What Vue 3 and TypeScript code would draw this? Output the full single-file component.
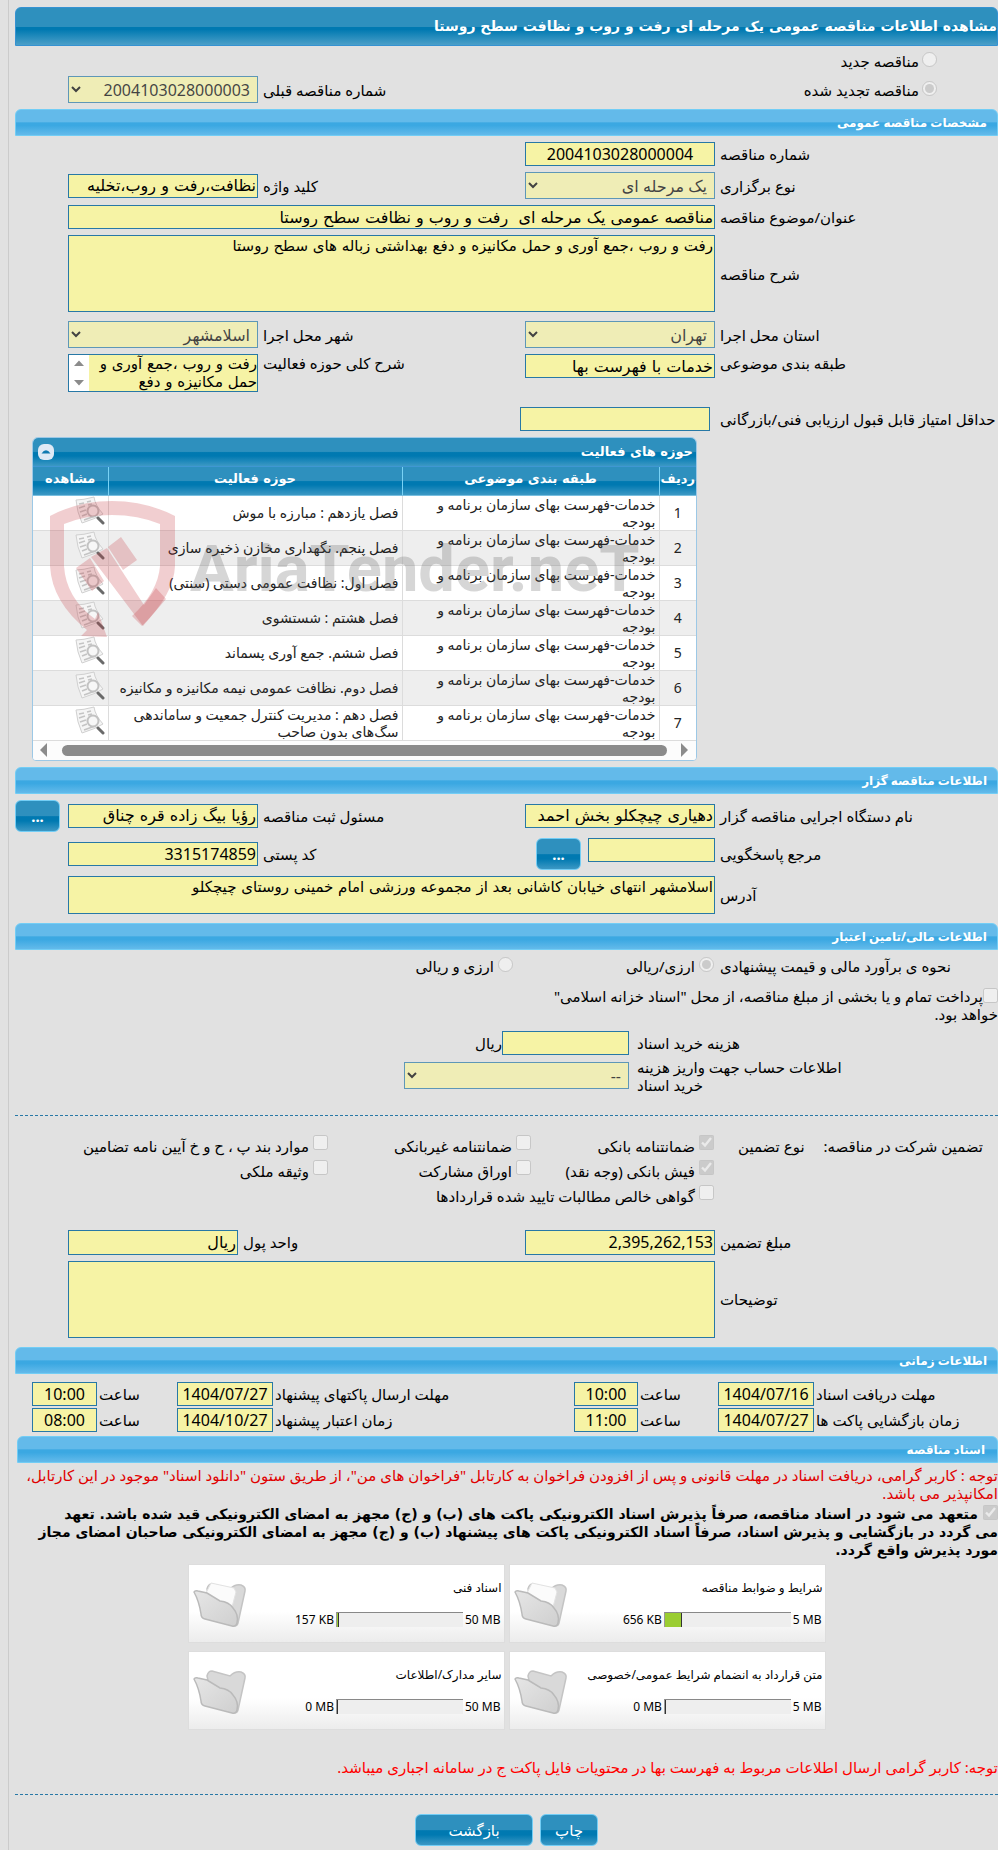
<script setup lang="ts">
interface Activity {
  id: number
  category: string
  title: string
}
interface Folder {
  title: string
  used: string
  limit: string
  percent: number
  filled: boolean
}

const description = 'رفت و روب ،جمع آوری و حمل مکانیزه و دفع بهداشتی زباله های سطح روستا'
const scope = 'رفت و روب ،جمع آوری و\nحمل مکانیزه و دفع'
const address = 'اسلامشهر انتهای خیابان کاشانی بعد از مجموعه ورزشی امام خمینی روستای چیچکلو'

const category = 'خدمات-فهرست بهای سازمان برنامه و بودجه'
const activities: Activity[] = [
  'فصل یازدهم : مبارزه با موش',
  'فصل پنجم. نگهداری مخازن ذخیره سازی',
  'فصل اول: نظافت عمومی دستی (سنتی)',
  'فصل هشتم : شستشوی',
  'فصل ششم. جمع آوری پسماند',
  'فصل دوم. نظافت عمومی نیمه مکانیزه و مکانیزه',
  'فصل دهم : مدیریت کنترل جمعیت و ساماندهی سگ‌های بدون صاحب',
].map((title, i) => ({ id: i + 1, category, title }))

const folders: Folder[] = [
  { title: 'شرایط و ضوابط مناقصه', used: '656 KB', limit: '5 MB', percent: 13, filled: true },
  { title: 'اسناد فنی', used: '157 KB', limit: '50 MB', percent: 1, filled: true },
  { title: 'متن قرارداد به انضمام شرایط عمومی/خصوصی', used: '0 MB', limit: '5 MB', percent: 0, filled: false },
  { title: 'سایر مدارک/اطلاعات', used: '0 MB', limit: '50 MB', percent: 0, filled: false },
]

const guarantees = [
  [
    { id: 'g1', text: 'ضمانتنامه بانکی', on: true },
    { id: 'g2', text: 'ضمانتنامه غیربانکی', on: false },
    { id: 'g3', text: 'موارد بند پ ، ح و خ آیین نامه تضامین', on: false },
  ],
  [
    { id: 'g4', text: 'فیش بانکی (وجه نقد)', on: true },
    { id: 'g5', text: 'اوراق مشارکت', on: false },
    { id: 'g6', text: 'وثیقه ملکی', on: false },
  ],
  [{ id: 'g7', text: 'گواهی خالص مطالبات تایید شده قراردادها', on: false }],
]

const schedule = [
  [
    { id: 's1', label: 'مهلت دریافت اسناد', date: '1404/07/16', time: '10:00' },
    { id: 's2', label: 'مهلت ارسال پاکتهای پیشنهاد', date: '1404/07/27', time: '10:00' },
  ],
  [
    { id: 's3', label: 'زمان بازگشایی پاکت ها', date: '1404/07/27', time: '11:00' },
    { id: 's4', label: 'زمان اعتبار پیشنهاد', date: '1404/10/27', time: '08:00' },
  ],
]
</script>

<template>
  <main class="page" dir="rtl">
    <h1 class="title">مشاهده اطلاعات مناقصه عمومی یک مرحله ای رفت و روب و نظافت سطح روستا</h1>

    <div class="kind first">
      <input id="kind-new" type="radio" name="kind" disabled /><label for="kind-new">مناقصه جدید</label>
    </div>
    <div class="row kind-row">
      <div class="kind span2">
        <input id="kind-renewed" type="radio" name="kind" checked disabled /><label for="kind-renewed">مناقصه تجدید شده</label>
      </div>
      <label class="lbl" for="prev">شماره مناقصه قبلی</label>
      <select id="prev" disabled><option>2004103028000003</option></select>
    </div>

    <h2 class="bar">مشخصات مناقصه عمومی</h2>
    <div class="row">
      <label class="lbl" for="num">شماره مناقصه</label>
      <input id="num" class="center" type="text" readonly value="2004103028000004" />
    </div>
    <div class="row">
      <label class="lbl" for="type">نوع برگزاری</label>
      <select id="type" disabled><option>یک مرحله ای</option></select>
      <label class="lbl" for="kw">کلید واژه</label>
      <input id="kw" class="fa" type="text" readonly value="نظافت،رفت و روب،تخلیه" />
    </div>
    <div class="row">
      <label class="lbl" for="subject">عنوان/موضوع مناقصه</label>
      <input id="subject" class="fa span3" type="text" readonly value="مناقصه عمومی یک مرحله ای  رفت و روب و نظافت سطح روستا" />
    </div>
    <div class="row">
      <label class="lbl" for="desc">شرح مناقصه</label>
      <textarea id="desc" class="span3 tall" readonly :value="description"></textarea>
    </div>
    <div class="row loose">
      <label class="lbl" for="province">استان محل اجرا</label>
      <select id="province" disabled><option>تهران</option></select>
      <label class="lbl" for="city">شهر محل اجرا</label>
      <select id="city" disabled><option>اسلامشهر</option></select>
    </div>
    <div class="row top">
      <label class="lbl" for="cls">طبقه بندی موضوعی</label>
      <input id="cls" class="fa" type="text" readonly value="خدمات با فهرست بها" />
      <label class="lbl" for="scope">شرح کلی حوزه فعالیت</label>
      <div class="scrollbox">
        <textarea id="scope" readonly :value="scope"></textarea>
        <svg class="vscroll" viewBox="0 0 20 36" aria-hidden="true">
          <path d="M5 11 L10 5.500 L15 11 Z M5 25 L10 30.500 L15 25 Z" fill="#8b8b8b" />
        </svg>
      </div>
    </div>
    <div class="row score">
      <label class="lbl" for="score">حداقل امتیاز قابل قبول ارزیابی فنی/بازرگانی</label>
      <input id="score" type="text" readonly />
    </div>

    <section class="panel">
      <header class="panel-head">
        <h3>حوزه های فعالیت</h3>
        <button type="button" class="collapse" aria-label="بستن">
          <svg viewBox="0 0 16 16"><path d="M3.500 9.500 Q8 3 12.500 9.500 Z" fill="#1079b0" /></svg>
        </button>
      </header>
      <table>
        <thead>
          <tr>
            <th class="c-num">ردیف</th>
            <th class="c-cat">طبقه بندی موضوعی</th>
            <th class="c-act">حوزه فعالیت</th>
            <th class="c-view">مشاهده</th>
          </tr>
        </thead>
        <tbody>
          <tr v-for="a in activities" :key="a.id">
            <td class="num">{{ a.id }}</td>
            <td class="cat">{{ a.category }}</td>
            <td>{{ a.title }}</td>
            <td class="view">
              <button type="button" class="icon" aria-label="مشاهده">
                <svg viewBox="0 0 30 30">
                  <path d="M1 4 Q8 4 19 1 Q20 9 28 18 Q20 23 7 27 Q2 16 1 4Z" fill="#f5f5f5" stroke="#d0d0d0" stroke-width="1" />
                  <path d="M4 8 L9 7 M4 12 L10 10 M5 16 L11 14 M7 20 L12 18 M12 6 L16 5 M13 9 L17 8 M9 24 L20 20" stroke="#c4c4c4" stroke-width="1.500" />
                  <circle cx="18" cy="15" r="5.500" fill="#f7f7f7" fill-opacity=".8" stroke="#c2c2c2" stroke-width="2" />
                  <path d="M23 22 L28 27" stroke="#6a6a6a" stroke-width="3" stroke-linecap="round" />
                </svg>
              </button>
            </td>
          </tr>
        </tbody>
      </table>
      <div class="hscroll" aria-hidden="true">
        <svg viewBox="0 0 8 14"><path d="M0 0 L7 7 L0 14Z" fill="#8b8b8b" /></svg>
        <span class="thumb"></span>
        <svg viewBox="0 0 8 14"><path d="M7 0 L0 7 L7 14Z" fill="#8b8b8b" /></svg>
      </div>
      <div class="mark" dir="ltr" aria-hidden="true">
        <svg viewBox="0 0 126 138">
          <path fill-rule="evenodd" d="M0 16 Q28 1 62 1 Q96 1 125 16 V66 Q124 94 92 126 L82 116 Q108 92 110 66 V24 Q88 15 62 15 Q36 15 14 24 V66 Q16 98 45 119 L48 112 L57 137 L31 136 L37 130 Q2 102 0 66Z" />
          <path d="M26 68 L40 58 L54 81 L42 91Z M58 47 L71 37 L87 60 L73 70Z M41 57 L57 48 L94 105 L106 88 L116 99 L93 126 Z" />
        </svg>
        <span>AriaTender.neT</span>
      </div>
    </section>

    <h2 class="bar">اطلاعات مناقصه گزار</h2>
    <div class="row">
      <label class="lbl" for="org">نام دستگاه اجرایی مناقصه گزار</label>
      <input id="org" class="fa" type="text" readonly value="دهیاری چیچکلو بخش احمد" />
      <label class="lbl" for="officer">مسئول ثبت مناقصه</label>
      <input id="officer" class="fa" type="text" readonly value="رؤیا بیگ زاده قره چناق" />
      <button type="button" class="btn dots end">...</button>
    </div>
    <div class="row">
      <label class="lbl" for="contact">مرجع پاسخگویی</label>
      <div class="pair">
        <input id="contact" type="text" readonly />
        <button type="button" class="btn dots">...</button>
      </div>
      <label class="lbl" for="zip">کد پستی</label>
      <input id="zip" type="text" readonly value="3315174859" />
    </div>
    <div class="row">
      <label class="lbl" for="addr">آدرس</label>
      <textarea id="addr" class="span3" readonly :value="address"></textarea>
    </div>

    <h2 class="bar loose">اطلاعات مالی/تامین اعتبار</h2>
    <div class="row money" role="radiogroup" aria-labelledby="money-label">
      <span id="money-label" class="lbl">نحوه ی برآورد مالی و قیمت پیشنهادی</span>
      <div class="opt">
        <input id="m1" type="radio" name="money" checked disabled /><label for="m1">ارزی/ریالی</label>
      </div>
      <div class="opt">
        <input id="m2" type="radio" name="money" disabled /><label for="m2">ارزی و ریالی</label>
      </div>
    </div>
    <p class="treasury">
      <input id="treasury" type="checkbox" disabled /><label for="treasury">پرداخت تمام و یا بخشی از مبلغ مناقصه، از محل "اسناد خزانه اسلامی"<br />خواهد بود.</label>
    </p>
    <div class="fee">
      <label class="lbl" for="fee">هزینه خرید اسناد</label>
      <div class="unit"><input id="fee" type="text" readonly /><span>ریال</span></div>
    </div>
    <div class="fee account">
      <label class="lbl" for="account">اطلاعات حساب جهت واریز هزینه<br />خرید اسناد</label>
      <select id="account" disabled><option>--</option></select>
    </div>
    <hr class="sep wide" />

    <div class="guarantee">
      <div class="g-title"><span>تضمین شرکت در مناقصه:</span><span>نوع تضمین</span></div>
      <div class="g-list">
        <div v-for="(line, i) in guarantees" :key="i" class="g-line">
          <div v-for="g in line" :key="g.id" class="opt">
            <input :id="g.id" type="checkbox" :checked="g.on" disabled /><label :for="g.id">{{ g.text }}</label>
          </div>
        </div>
      </div>
    </div>

    <div class="row amount">
      <label class="lbl" for="amount">مبلغ تضمین</label>
      <input id="amount" type="text" readonly value="2,395,262,153" />
      <label class="lbl" for="unit">واحد پول</label>
      <input id="unit" class="fa" type="text" readonly value="ریال" />
    </div>
    <div class="row">
      <label class="lbl" for="notes">توضیحات</label>
      <textarea id="notes" class="span3 tall" readonly></textarea>
    </div>

    <h2 class="bar loose">اطلاعات زمانی</h2>
    <div class="times">
      <div v-for="(line, i) in schedule" :key="i" class="t-line">
        <template v-for="s in line" :key="s.id">
          <label :for="s.id">{{ s.label }}</label>
          <input :id="s.id" class="center" type="text" readonly :value="s.date" />
          <label :for="s.id + 't'">ساعت</label>
          <input :id="s.id + 't'" class="center" type="text" readonly :value="s.time" />
        </template>
      </div>
    </div>

    <h2 class="bar docs">اسناد مناقصه</h2>
    <p class="warn">توجه : کاربر گرامی، دریافت اسناد در مهلت قانونی و پس از افزودن فراخوان به کارتابل "فراخوان های من"، از طریق ستون "دانلود اسناد" موجود در این کارتابل،<br />امکانپذیر می باشد.</p>
    <p class="pledge">
      <input id="pledge" type="checkbox" checked disabled /><label for="pledge">متعهد می شود در اسناد مناقصه، صرفاً پذیرش اسناد الکترونیکی پاکت های (ب) و (ج) مجهز به امضای الکترونیکی قید شده باشد. تعهد<br />می گردد در بازگشایی و پذیرش اسناد، صرفاً اسناد الکترونیکی پاکت های پیشنهاد (ب) و (ج) مجهز به امضای الکترونیکی صاحبان امضای مجاز<br />مورد پذیرش واقع گردد.</label>
    </p>

    <div class="cards">
      <article v-for="f in folders" :key="f.title" class="card">
        <div class="info">
          <a href="#">{{ f.title }}</a>
          <div class="usage">
            <span class="limit" dir="ltr">{{ f.limit }}</span>
            <span class="meter" dir="ltr"><i :style="{ width: f.percent + '%' }"></i></span>
            <span dir="ltr">{{ f.used }}</span>
          </div>
        </div>
        <svg class="folder" viewBox="0 0 54 48" aria-hidden="true">
          <defs>
            <linearGradient id="fold" x1="0" y1="0" x2="1" y2="1">
              <stop offset="0" stop-color="#e6e6e6" />
              <stop offset="1" stop-color="#cfcfcf" />
            </linearGradient>
          </defs>
          <path d="M14 8 Q15 3 19 3 L37 8 Q42 3 48 4 Q53 6 52 10 L45 42 Q44 46 40 44 L18 26Z" fill="#d9d9d9" stroke="#c4c4c4" stroke-width="1.500" />
          <path v-if="f.filled" d="M13 12 L18 2 L41 7 L43 11 L38 30 L24 22Z" fill="#fbfbfb" stroke="#e2e2e2" />
          <path d="M1 11 Q2 9 5 10 L14 12 L27 20 Q36 21 40 27 Q46 34 44 42 Q43 46 39 45 L12 38 Q8 37 8 33 Q6 20 1 11Z" fill="url(#fold)" stroke="#bababa" stroke-width="1.500" />
        </svg>
      </article>
    </div>

    <p class="notice">توجه: کاربر گرامی ارسال اطلاعات مربوط به فهرست بها در محتویات فایل پاکت ج در سامانه اجباری میباشد.</p>
    <hr class="sep" />
    <div class="actions">
      <button type="button" class="btn">چاپ</button>
      <button type="button" class="btn back">بازگشت</button>
    </div>
  </main>
</template>

<style>
body {
  margin: 0;
  background: #e1e1e1;
  overflow-x: hidden;
}
</style>

<style scoped>
.page {
  box-sizing: border-box;
  margin-left: 8px;
  padding: 7px 0 5px 6px;
  border-left: 1px solid #cbcbcb;
  font: 15px/18px "Noto Sans", "DejaVu Sans", sans-serif;
  color: #000;
}
.page *, .page *::before {
  box-sizing: border-box;
}
h1, h2, h3, p {
  margin: 0;
}
input, select, textarea, button {
  font-family: inherit;
  margin: 0;
}
input[type="text"], select, textarea {
  width: 100%;
  min-width: 0;
  border: 1px solid #2778a6;
  border-radius: 0;
  background: #f6f3a5;
  color: #000;
  outline: 0;
}
input[type="text"] {
  height: 24px;
  padding: 0 1px;
  font-size: 16px;
}
input.center {
  text-align: center;
}
.fa, .title, .pledge, .panel-head, textarea, th {
  font-family: "DejaVu Sans", sans-serif;
}
select {
  height: 27px;
  padding: 0 3px;
  font-size: 16px;
  opacity: .7;
}
textarea {
  display: block;
  height: 38px;
  padding: 1px;
  resize: none;
  overflow: hidden;
  font-size: 15px;
  line-height: 18px;
}
textarea.tall {
  height: 77px;
}
input[type="radio"], input[type="checkbox"] {
  flex: none;
  width: 15px;
  height: 15px;
}
.title {
  height: 39px;
  border: 1px solid #3592d2;
  border-radius: 6px 6px 0 0;
  background: linear-gradient(#2e90be 0 50%, #0079b1 52% 58%, #4b9fc8);
  color: #fff;
  font-size: 14px;
  line-height: 37px;
}
.bar {
  height: 27px;
  margin-top: 6px;
  padding-right: 10px;
  border: 1px solid #72cdf5;
  border-radius: 6px 6px 0 0;
  background: linear-gradient(#63baea 0 46%, #3ba8e2 52% 62%, #63baea);
  color: #fff;
  font-size: 12px;
  line-height: 25px;
}
.bar.loose {
  margin-top: 9px;
}
.bar.docs {
  margin: 4px 0 0 2px;
  padding-right: 12px;
}
.row {
  display: grid;
  grid-template-columns: 283fr 190fr 267fr 190fr 53fr;
  align-items: center;
  margin-top: 6px;
}
.row.loose {
  margin-top: 9px;
}
.row.top {
  align-items: start;
}
.span2 {
  grid-column: span 2;
}
.span3 {
  grid-column: span 3;
}
.lbl {
  padding-left: 5px;
  text-align: left;
}
.kind {
  display: flex;
  gap: 3px;
  padding-right: 61px;
}
.kind.first {
  padding-top: 6px;
  height: 30px;
}
.row.kind-row {
  margin-top: 0;
}
.scrollbox {
  display: flex;
  border: 1px solid #2778a6;
  background: #fff;
}
.scrollbox textarea {
  height: 36px;
  padding: 0;
  border: 0;
}
.vscroll {
  flex: none;
  width: 20px;
}
.row.score {
  margin-top: 15px;
}
.score input {
  margin: 0 5px 0 -5px;
}

.panel {
  position: relative;
  margin: 6px 301px 0 17px;
  border: 1px solid #9cc8e6;
  border-radius: 6px 6px 4px 4px;
  background: #fff;
  overflow: hidden;
}
.panel-head {
  display: flex;
  justify-content: space-between;
  align-items: center;
  height: 29px;
  padding: 0 3px 0 5px;
  border-bottom: 1px solid #3f97d3;
  background: linear-gradient(#2e90be 0 48%, #0079b1 52% 64%, #3c98c4);
  color: #fff;
}
.panel-head h3 {
  font-size: 13px;
}
.collapse {
  width: 16px;
  height: 16px;
  padding: 0;
  border: 0;
  border-radius: 6px;
  background: #dfe9f5;
}
.collapse svg {
  display: block;
}
table {
  width: 100%;
  border-collapse: collapse;
  table-layout: fixed;
}
th {
  height: 28px;
  padding: 0 0 3px;
  border-left: 1px solid #79d2f5;
  border-bottom: 1px solid #79bfe0;
  background: linear-gradient(#2e90be 0 48%, #0079b1 52% 64%, #3c98c4);
  color: #fff;
  font-size: 13px;
}
.c-num { width: 37px; }
.c-cat { width: 257px; }
.c-view { width: 75px; }
th:last-child, td:last-child {
  border-left: 0;
}
td {
  height: 35px;
  padding: 0 3px;
  border-left: 1px solid #dcdcdc;
  border-bottom: 1px solid #dcdcdc;
  color: #222;
  font-size: 14px;
  line-height: 17px;
}
tr:nth-child(even) td {
  background: #eee;
}
td.num {
  padding: 0;
  text-align: center;
}
td.cat {
  padding-left: 30px;
}
td.view {
  padding: 0 3px 0 0;
  vertical-align: top;
}
.icon {
  display: block;
  width: 30px;
  height: 30px;
  padding: 0;
  border: 0;
  background: none;
}
.hscroll {
  display: flex;
  align-items: center;
  gap: 14px;
  height: 19px;
  padding: 0 7px;
  background: #fcfcfc;
}
.hscroll svg {
  flex: none;
  width: 8px;
  height: 14px;
}
.hscroll .thumb {
  flex: 1;
  height: 11px;
  border-radius: 6px;
  background: #8b8b8b;
}
.mark {
  position: absolute;
  left: 17px;
  top: 62px;
  display: flex;
  align-items: center;
  gap: 14px;
  pointer-events: none;
  color: rgba(90, 90, 90, .25);
  font: bold 65px/80px Roboto, sans-serif;
  white-space: nowrap;
}
.mark svg {
  width: 126px;
  height: 138px;
  fill: rgba(195, 50, 60, .24);
}

.btn {
  height: 32px;
  border: 1px solid #72cdf5;
  border-radius: 6px;
  background: linear-gradient(#2e90be 0 50%, #0079b1 52% 66%, #3c98c4);
  color: #fff;
  font-size: 15px;
}
.btn.dots {
  flex: none;
  width: 45px;
  padding: 0;
  font-weight: bold;
}
.end {
  justify-self: end;
}
.pair {
  display: flex;
  gap: 7px;
}
.pair input[type="text"] {
  flex: none;
  width: 127px;
}
.row.money {
  grid-template-columns: 283fr 201fr 499fr;
  height: 29px;
  margin-top: 0;
  padding-top: 3px;
}
.opt {
  display: flex;
  gap: 4px;
  padding-right: 1px;
}
.treasury {
  margin-top: 8px;
}
.treasury input, .pledge input {
  display: inline-block;
  margin-left: 2px;
  vertical-align: -1px;
}
.treasury input {
  margin-left: 0;
}
.fee {
  display: grid;
  grid-template-columns: 369fr 225fr 389fr;
  align-items: center;
  margin-top: 8px;
}
.fee .lbl {
  padding-left: 8px;
}
.unit {
  display: flex;
  align-items: center;
}
.unit input[type="text"] {
  width: 127px;
}
.fee.account {
  margin-top: 3px;
}
.sep {
  margin: 21px 0 0;
  border: 0;
  border-top: 1px dashed #2778a6;
}
.guarantee {
  display: grid;
  grid-template-columns: 283fr 700fr;
  margin-top: 19px;
}
.g-title {
  display: flex;
  justify-content: space-between;
  padding: 2px 15px 0 23px;
}
.g-line {
  display: grid;
  grid-template-columns: 183fr 203fr 314fr;
  height: 25px;
}
.g-line .opt {
  white-space: nowrap;
  align-items: start;
}
.g-line .opt label {
  padding-top: 2px;
}
.row.amount {
  grid-template-columns: 283fr 190fr 287fr 170fr 53fr;
  margin-top: 20px;
}
.row.amount input {
  height: 25px;
}
.times {
  margin-top: 8px;
}
.t-line {
  display: grid;
  grid-template-columns: 184fr 96fr 80fr 64fr 301fr 96fr 80fr 65fr 17fr;
  align-items: center;
  margin-bottom: 2px;
}
.t-line label {
  padding-left: 2px;
  text-align: left;
}
.warn {
  margin-top: 3px;
  color: #e00000;
}
.pledge {
  margin-top: 3px;
  font-size: 14px;
  font-weight: bold;
}
.pledge input {
  margin-left: 5px;
}
.cards {
  display: grid;
  grid-template-columns: 317px 317px;
  justify-content: center;
  gap: 8px 4px;
  margin-top: 5px;
}
.card {
  display: flex;
  justify-content: space-between;
  height: 79px;
  padding: 14px 2px 0 4px;
  border: 1px solid #ddd;
  background: linear-gradient(#fff 60%, #ececec);
  font-size: 12px;
}
.card a {
  color: #000;
  text-decoration: none;
}
.info {
  flex: 1;
  white-space: nowrap;
}
.usage {
  display: flex;
  align-items: center;
  margin-top: 14px;
}
.usage .limit {
  padding-right: 1px;
}
.meter {
  width: 127px;
  height: 15px;
  margin: 0 2px;
  border-top: 1px solid #888;
  border-left: 1px solid #999;
  background: #eee;
}
.meter i {
  display: block;
  box-sizing: content-box;
  height: 14px;
  border-right: 1px solid #333;
  background: #9acd32;
}
.folder {
  flex: none;
  width: 54px;
  height: 48px;
  margin-top: 2px;
}
.notice {
  margin-top: 28px;
  color: #f00;
}
.notice + .sep {
  margin-top: 18px;
}
.actions {
  display: flex;
  justify-content: center;
  gap: 7px;
  margin-top: 19px;
}
.actions .btn {
  width: 58px;
}
.actions .back {
  width: 118px;
}
</style>
